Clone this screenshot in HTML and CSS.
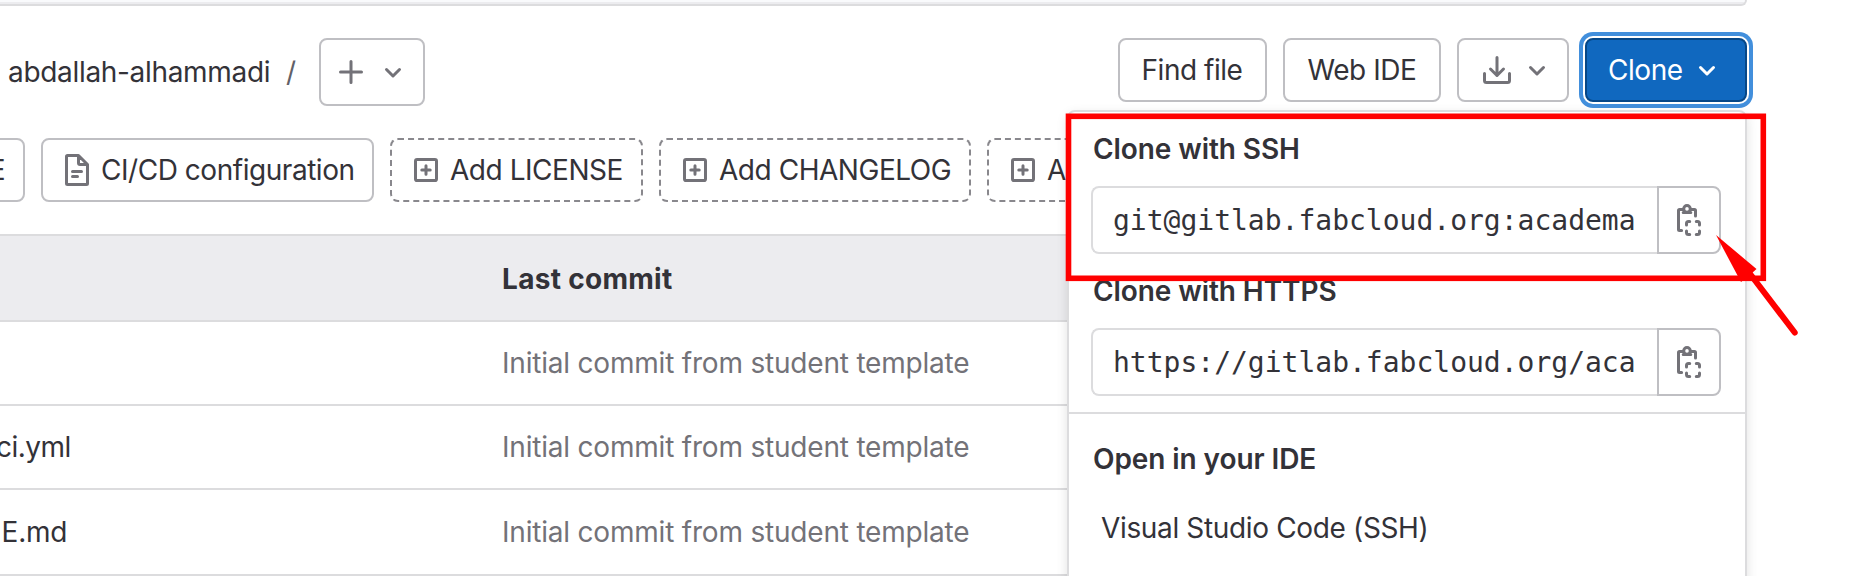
FILE: index.html
```html
<!DOCTYPE html>
<html lang="en">
<head>
<meta charset="utf-8">
<title>Repository</title>
<link rel="stylesheet" href="styles.css">
</head>
<body>
<svg class="sprite" aria-hidden="true">
  <symbol id="chevron" viewBox="0 0 16 16"><path d="M4.75 6.75 8 10l3.25-3.25"/></symbol>
  <symbol id="plus" viewBox="0 0 16 16"><path d="M8 2.75v10.5M2.75 8h10.5"/></symbol>
  <symbol id="plus-square" viewBox="0 0 16 16"><rect x="2.75" y="2.75" width="10.5" height="10.5" rx=".8"/><path d="M8 5.9v4.2M5.9 8h4.2"/></symbol>
  <symbol id="document" viewBox="0 0 16 16"><path d="M3.25.75h5.5l4.5 4.5v9.5a.5.5 0 0 1-.5.5h-9.5a.5.5 0 0 1-.5-.5V1.25a.5.5 0 0 1 .5-.5zM8.75 1v3.5a.75.75 0 0 0 .75.75H13M5.75 8.75h4.5M5.75 11.25h2.5"/></symbol>
  <symbol id="download" viewBox="0 0 16 16"><path d="M8 1.75v9M4.75 7.5 8 10.75l3.25-3.25M1.75 9.75v3.5a1 1 0 0 0 1 1h10.5a1 1 0 0 0 1-1v-3.5"/></symbol>
  <symbol id="copy" viewBox="0 0 16 16"><path d="M4.3 13.25H3.25a.5.5 0 0 1-.5-.5v-9.5a.5.5 0 0 1 .5-.5H5M9 2.75h1.75a.5.5 0 0 1 .5.5V6M5.1 4.25h3.8"/><circle cx="7" cy="2.45" r="1.65"/><path d="M6.75 10.5v-.75a1 1 0 0 1 1-1h.6M11.65 8.75h.6a1 1 0 0 1 1 1v.75M13.25 13.5v.75a1 1 0 0 1-1 1h-.6M8.35 15.25h-.6a1 1 0 0 1-1-1v-.75"/></symbol>
</svg>
<main class="page">
  <div class="commit-card"></div>
  <header class="toolbar">
    <nav class="crumbs">
      <span class="crumb-name">abdallah-alhammadi</span>
      <span class="crumb-sep">/</span>
      <button class="btn btn-add"><svg class="icon"><use href="#plus"/></svg><svg class="icon"><use href="#chevron"/></svg></button>
    </nav>
    <div class="actions">
      <button class="btn btn-find"><span>Find file</span></button>
      <button class="btn btn-ide"><span>Web IDE</span></button>
      <button class="btn btn-download"><svg class="icon"><use href="#download"/></svg><svg class="icon"><use href="#chevron"/></svg></button>
      <button class="btn btn-clone"><span>Clone</span><svg class="icon"><use href="#chevron"/></svg></button>
    </div>
  </header>
  <div class="shortcuts">
    <button class="btn btn-readme"><span>E</span></button>
    <button class="btn btn-cicd"><svg class="icon"><use href="#document"/></svg><span>CI/CD configuration</span></button>
    <button class="btn dashed btn-license"><svg class="icon"><use href="#plus-square"/></svg><span>Add LICENSE</span></button>
    <button class="btn dashed btn-changelog"><svg class="icon"><use href="#plus-square"/></svg><span>Add CHANGELOG</span></button>
    <button class="btn dashed btn-more"><svg class="icon"><use href="#plus-square"/></svg><span>A</span></button>
  </div>
  <section class="files">
    <div class="row head"><span></span><b>Last commit</b></div>
    <div class="row"><span></span><span class="msg">Initial commit from student template</span></div>
    <div class="row"><span class="yml">ci.yml</span><span class="msg">Initial commit from student template</span></div>
    <div class="row last"><span class="readme">E.md</span><span class="msg">Initial commit from student template</span></div>
  </section>
  <aside class="menu">
    <h2 class="label">Clone with SSH</h2>
    <div class="field"><code>git@gitlab.fabcloud.org:academa</code><button class="copy"><svg class="icon"><use href="#copy"/></svg></button></div>
    <h2 class="label">Clone with HTTPS</h2>
    <div class="field"><code>https://gitlab.fabcloud.org/aca</code><button class="copy"><svg class="icon"><use href="#copy"/></svg></button></div>
    <div class="ide">
      <h2 class="label">Open in your IDE</h2>
      <a class="item">Visual Studio Code (SSH)</a>
    </div>
  </aside>
  <svg class="annotation" viewBox="0 0 1870 576">
    <rect x="1068.5" y="116.3" width="694.8" height="162"/>
    <path class="shaft" d="M1749 272.500 1794.700 332.500"/>
    <path class="tip" d="M1716 235 1756.500 269 1751 274 1741 282z"/>
  </svg>
</main>
</body>
</html>
```
FILE: styles.css
```css
* { box-sizing: border-box; }

body {
  margin: 0;
  background: #fff;
  color: #333238;
  font-family: Inter, "Liberation Sans", sans-serif;
  font-size: 28px;
  line-height: 40px;
}

.sprite { position: absolute; width: 0; height: 0; }

.page {
  position: relative;
  width: 1870px;
  height: 576px;
  overflow: hidden;
}

.commit-card {
  width: 1747px;
  height: 6px;
  border: solid #dcdcde;
  border-width: 0 2px 2px 0;
  border-bottom-right-radius: 8px;
  background: linear-gradient(#f9fafc 0 2px, #ececef 2px);
}

.toolbar {
  display: flex;
  justify-content: space-between;
  align-items: flex-start;
  width: 1747px;
  padding-top: 32px;
}

.crumbs { display: flex; align-items: center; height: 68px; padding-left: 8px; white-space: nowrap; }
.crumb-name { width: 278px; letter-spacing: -.32px; }
.crumb-sep { width: 33px; color: #626168; }
.actions { display: flex; gap: 16px; }

.btn {
  display: flex;
  flex: none;
  align-items: center;
  height: 64px;
  margin: 0;
  padding: 0 18px;
  border: 2px solid #bfbfc3;
  border-radius: 8px;
  background: #fff;
  color: #333238;
  font: inherit;
  letter-spacing: -.46px;
  white-space: nowrap;
}

.icon {
  flex: none;
  width: 32px;
  height: 32px;
  fill: none;
  stroke: #737278;
  stroke-width: 1.5;
  stroke-linecap: round;
  stroke-linejoin: round;
}

.btn-add { width: 106px; height: 68px; padding: 0 14px; gap: 10px; }
.btn-find { width: 149px; padding: 0 21.5px; }
.btn-ide { width: 158px; padding: 0 22.5px; }
.btn-download { width: 112px; padding: 0 22px; gap: 8px; }
.btn-clone {
  width: 162px;
  padding: 0 22px 0 21px;
  justify-content: space-between;
  border-color: #064787;
  background: #1068bf;
  color: #fff;
  box-shadow: 0 0 0 2px #fff, 0 0 0 6px #428fdc;
}
.btn-clone .icon { stroke: #fff; }

.shortcuts { display: flex; gap: 16px; margin: 32px 0 0 -75px; }
.shortcuts .btn { gap: 8px; }
.shortcuts .dashed { border: 2px dashed #89888d; }
.btn-readme { width: 100px; justify-content: flex-end; }
.btn-cicd { width: 333px; }
.btn-license { width: 253px; }
.btn-changelog { width: 312px; }
.btn-more { width: 200px; }

.files { width: 1747px; margin-top: 32px; border-top: 2px solid #dcdcde; }
.row {
  display: grid;
  grid-template-columns: 502px 1fr;
  align-items: center;
  height: 84px;
  border-bottom: 2px solid #dcdcde;
}
.row.head { height: 86px; padding-top: 2px; background: #ececef; }
.row.last { height: 86px; padding-bottom: 1px; }
.head b { font-weight: 700; letter-spacing: .3px; }
.msg { color: #737278; letter-spacing: -.2px; }
.yml { margin-left: -4px; letter-spacing: -.5px; }
.readme { margin-left: 1.5px; letter-spacing: -.2px; }

.menu {
  position: absolute;
  left: 1067px;
  top: 110px;
  width: 680px;
  height: 500px;
  padding: 17px 0 0 22px;
  border: 2px solid #dcdcde;
  border-radius: 8px;
  background: #fff;
  box-shadow: 0 4px 12px rgba(0, 0, 0, .12);
}
.label { margin: 0; font-size: 28px; font-weight: 600; line-height: 40px; padding-left: 2px; letter-spacing: -.08px; }
.field { display: flex; width: 630px; height: 68px; margin: 17px 0; }
.field code {
  flex: 1;
  padding: 2px 20px 0;
  border: 2px solid #dcdcde;
  border-right: 0;
  border-radius: 8px 0 0 8px;
  font: 28px/62px "DejaVu Sans Mono", monospace;
  white-space: nowrap;
}
.copy {
  display: flex;
  align-items: center;
  width: 64px;
  padding: 0 14px;
  border: 2px solid #bfbfc3;
  border-radius: 0 8px 8px 0;
  background: #fff;
}
.ide { margin: -1px 0 0 -22px; padding: 25px 22px 0; border-top: 2px solid #dcdcde; }
.item { display: block; margin-top: 29px; padding-left: 10px; letter-spacing: -.35px; }

.annotation {
  position: absolute;
  left: 0;
  top: 0;
  width: 1870px;
  height: 576px;
  fill: none;
  stroke: #f00;
  stroke-width: 5.6;
}
.annotation .shaft { stroke-linecap: round; stroke-width: 6; }
.annotation .tip { fill: #f00; stroke: none; }
```
